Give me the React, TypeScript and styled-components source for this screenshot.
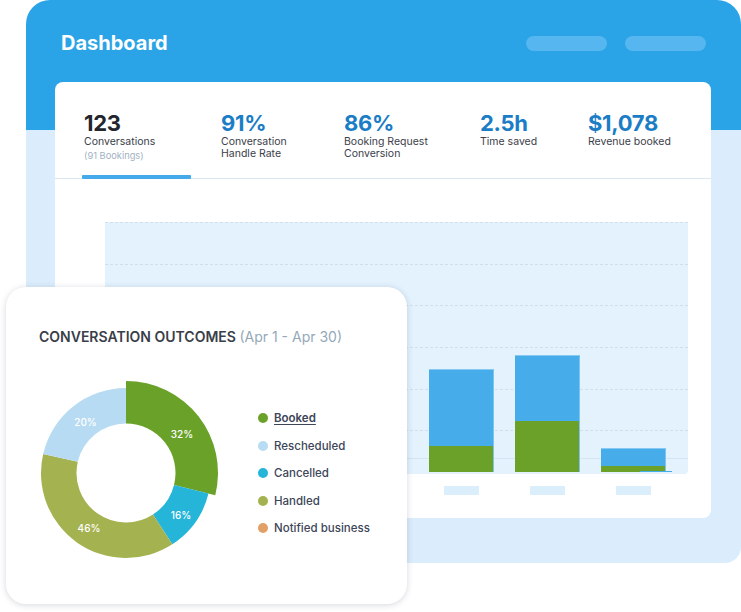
import React from "react";
import styled, { createGlobalStyle } from "styled-components";

const Global = createGlobalStyle`
  html, body { margin: 0; padding: 0; background: #ffffff; }
  body { font-family: Inter, "Noto Sans", sans-serif; -webkit-font-smoothing: antialiased; }
  #root { width: 741px; }
  * { box-sizing: border-box; }
`;

const Page = styled.div`
  position: relative;
  width: 741px;
  height: 612px;
`;

const Frame = styled.div`
  margin-left: 26px;
  width: 715px;
  height: 563px;
  padding: 31px 30px 0 29px;
  border-radius: 24px 24px 16px 16px;
  background: linear-gradient(to bottom, #2aa4e6 0, #2aa4e6 130px, #dbedfc 130px);
`;

const Header = styled.div`
  display: flex;
  align-items: center;
  justify-content: space-between;
  padding: 0 5px 0 6px;
  height: 24px;
`;

const Title = styled.h1`
  margin: 0;
  font-size: 20px;
  line-height: 24px;
  font-weight: 700;
  color: #ffffff;
`;

const Pills = styled.div`
  display: flex;
  gap: 18px;
`;

const Pill = styled.div`
  width: 81px;
  height: 15px;
  border-radius: 8px;
  background: #56b6ef;
`;

const Card = styled.div`
  margin-top: 27px;
  height: 436px;
  background: #ffffff;
  border-radius: 8px;
`;

const StatsRow = styled.div`
  display: grid;
  grid-template-columns: 137px 123px 136px 108px 1fr;
  height: 97px;
  padding: 28px 0 0 29px;
  border-bottom: 1px solid #dbe8f2;
`;

const Stat = styled.div`
  display: flex;
  flex-direction: column;
`;

const StatValue = styled.div<{ $accent?: boolean }>`
  font-size: 22px;
  line-height: 26px;
  font-weight: 700;
  letter-spacing: -0.3px;
  color: ${(p) => (p.$accent ? "#1b7dc6" : "#24262d")};
`;

const StatLabel = styled.div`
  font-size: 10.5px;
  line-height: 10.5px;
  color: #3b4049;
  margin-top: 1px;
`;

const StatSub = styled.div`
  font-size: 9.3px;
  line-height: 11px;
  margin-top: 2px;
  color: #9fb3c3;
`;

const TabIndicator = styled.div`
  margin-top: auto;
  margin-left: -2px;
  margin-bottom: -1px;
  width: 109px;
  height: 4px;
  border-radius: 1px;
  background: #44aaea;
`;

const ChartSection = styled.div`
  padding: 43px 23px 0 50px;
`;

const Plot = styled.div`
  display: grid;
  height: 252px;
  background: #e3f2fd;
  border-radius: 0 3px 4px 0;
`;

const GridLayer = styled.div`
  grid-area: 1 / 1;
  display: flex;
  flex-direction: column;
`;

const GridLine = styled.div<{ $h: number; $solid?: boolean }>`
  height: ${(p) => p.$h}px;
  border-top: 1px ${(p) => (p.$solid ? "solid #d3e5f2" : "dashed #cfe0ec")};
`;

const BarsLayer = styled.div`
  grid-area: 1 / 1;
  display: flex;
  align-items: flex-end;
  gap: 21px;
  padding: 0 0 2px 324px;
`;

const Bar = styled.div<{ $h: number }>`
  position: relative;
  width: 65px;
  height: ${(p) => p.$h}px;
  display: flex;
  flex-direction: column;
  border-right: 1px solid #7fc4ee;
`;

const BlueSeg = styled.div`
  flex: 1;
  background: #47acea;
  border-top: 1px solid #86caf3;
`;

const GreenSeg = styled.div<{ $h: number }>`
  height: ${(p) => p.$h}px;
  background: #6ba129;
`;

const Stub = styled.div`
  position: absolute;
  left: 39px;
  bottom: 0;
  width: 32px;
  height: 1.5px;
  background: #47acea;
`;

const AxisRow = styled.div`
  display: flex;
  gap: 21px;
  padding-left: 324px;
  margin-top: 12px;
`;

const AxisSlot = styled.div`
  width: 65px;
  display: flex;
  justify-content: center;
`;

const AxisTick = styled.div`
  width: 35px;
  height: 9px;
  background: #dbeefc;
`;

const PieCard = styled.div`
  position: absolute;
  left: 6px;
  top: 287px;
  width: 401px;
  height: 317px;
  padding: 41px 0 0 27px;
  background: #ffffff;
  border-radius: 20px;
  box-shadow: 0 1px 6px rgba(40, 60, 80, 0.2);
`;

const CardTitle = styled.h2`
  margin: 0 0 0 6px;
  font-size: 14px;
  line-height: 18px;
  font-weight: 600;
  color: #3a3e48;
  white-space: nowrap;
`;

const Range = styled.span`
  font-weight: 400;
  color: #94a9b8;
`;

const DonutRow = styled.div`
  display: flex;
  align-items: center;
  margin-top: 34px;
`;

const Legend = styled.ul`
  list-style: none;
  margin: 0 0 0 39px;
  padding: 0;
  display: flex;
  flex-direction: column;
  gap: 13.5px;
`;

const LegendItem = styled.li<{ $active?: boolean }>`
  display: flex;
  align-items: center;
  gap: 6px;
  font-size: 11.5px;
  line-height: 14px;
  font-weight: ${(p) => (p.$active ? 600 : 500)};
  color: #3d4558;
  text-decoration: ${(p) => (p.$active ? "underline" : "none")};
  text-underline-offset: 2px;
`;

const Dot = styled.span<{ $c: string }>`
  width: 10px;
  height: 10px;
  border-radius: 50%;
  background: ${(p) => p.$c};
  flex: none;
`;

const stats = [
  { value: "123", label: ["Conversations"], sub: "(91 Bookings)", accent: false },
  { value: "91%", label: ["Conversation", "Handle Rate"], accent: true },
  { value: "86%", label: ["Booking Request", "Conversion"], accent: true },
  { value: "2.5h", label: ["Time saved"], accent: true },
  { value: "$1,078", label: ["Revenue booked"], accent: true },
];

const gridLines = [42, 41, 42, 42, 41, 28];

const bars = [
  { total: 103, green: 26 },
  { total: 117, green: 51 },
  { total: 24, green: 6, stub: true },
];

const C = 93;
function slice(R: number, r: number, a0: number, a1: number) {
  const pt = (a: number, rad: number) => {
    const t = (a * Math.PI) / 180;
    return `${(C + rad * Math.sin(t)).toFixed(2)} ${(C - rad * Math.cos(t)).toFixed(2)}`;
  };
  const large = a1 - a0 > 180 ? 1 : 0;
  return `M ${pt(a0, R)} A ${R} ${R} 0 ${large} 1 ${pt(a1, R)} L ${pt(a1, r)} A ${r} ${r} 0 ${large} 0 ${pt(a0, r)} Z`;
}

const slices = [
  { R: 92, a0: 0, a1: 104, c: "#6aa229", label: "32%", x: 149, y: 54 },
  { R: 85, a0: 104, a1: 147, c: "#24b5d9", label: "16%", x: 148, y: 135 },
  { R: 85, a0: 147, a1: 283, c: "#a5b250", label: "46%", x: 56, y: 148 },
  { R: 85, a0: 283, a1: 360, c: "#b6dbf3", label: "20%", x: 52.5, y: 42 },
];

const legend = [
  { name: "Booked", c: "#6aa229", active: true },
  { name: "Rescheduled", c: "#b7dcf4" },
  { name: "Cancelled", c: "#24b5d9" },
  { name: "Handled", c: "#a5b250" },
  { name: "Notified business", c: "#e3a066" },
];

function Donut() {
  return (
    <svg width={186} height={186} viewBox="0 0 186 186" style={{ flex: "none" }}>
      {slices.map((s) => (
        <path key={s.label} d={slice(s.R, 49.5, s.a0, s.a1)} fill={s.c} />
      ))}
      {slices.map((s) => (
        <text
          key={s.label + "t"}
          x={s.x}
          y={s.y}
          textAnchor="middle"
          dominantBaseline="central"
          fontSize={10}
          fontWeight={500}
          fontFamily="Inter, sans-serif"
          fill="#ffffff"
        >
          {s.label}
        </text>
      ))}
    </svg>
  );
}

export default function App() {
  return (
    <>
      <Global />
      <Page>
        <Frame>
          <Header>
            <Title>Dashboard</Title>
            <Pills>
              <Pill />
              <Pill />
            </Pills>
          </Header>
          <Card>
            <StatsRow>
              {stats.map((s, i) => (
                <Stat key={s.value}>
                  <StatValue $accent={s.accent}>{s.value}</StatValue>
                  {s.label.map((l) => (
                    <StatLabel key={l}>{l}</StatLabel>
                  ))}
                  {s.sub && <StatSub>{s.sub}</StatSub>}
                  {i === 0 && <TabIndicator />}
                </Stat>
              ))}
            </StatsRow>
            <ChartSection>
              <Plot>
                <GridLayer>
                  {gridLines.map((h, i) => (
                    <GridLine key={i} $h={h} />
                  ))}
                  <GridLine $h={1} $solid />
                </GridLayer>
                <BarsLayer>
                  {bars.map((b, i) => (
                    <Bar key={i} $h={b.total}>
                      <BlueSeg />
                      <GreenSeg $h={b.green} />
                      {b.stub && <Stub />}
                    </Bar>
                  ))}
                </BarsLayer>
              </Plot>
              <AxisRow>
                {bars.map((_, i) => (
                  <AxisSlot key={i}>
                    <AxisTick />
                  </AxisSlot>
                ))}
              </AxisRow>
            </ChartSection>
          </Card>
        </Frame>
        <PieCard>
          <CardTitle>
            CONVERSATION OUTCOMES <Range>(Apr 1 - Apr 30)</Range>
          </CardTitle>
          <DonutRow>
            <Donut />
            <Legend>
              {legend.map((l) => (
                <LegendItem key={l.name} $active={l.active}>
                  <Dot $c={l.c} />
                  <span>{l.name}</span>
                </LegendItem>
              ))}
            </Legend>
          </DonutRow>
        </PieCard>
      </Page>
    </>
  );
}
